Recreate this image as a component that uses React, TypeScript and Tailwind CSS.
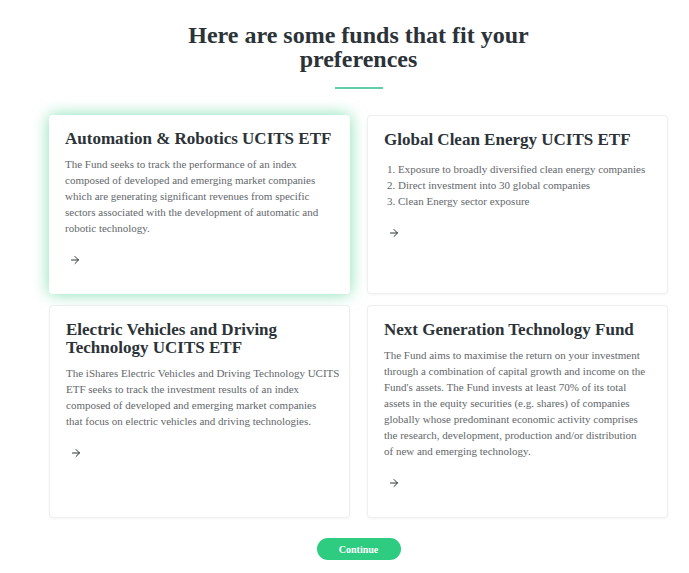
import { ArrowRight } from 'lucide-react';

type Fund = {
  title: string;
  lines?: string[];
  items?: string[];
  active?: boolean;
};

const funds: Fund[] = [
  {
    title: 'Automation & Robotics UCITS ETF',
    lines: [
      'The Fund seeks to track the performance of an index',
      'composed of developed and emerging market companies',
      'which are generating significant revenues from specific',
      'sectors associated with the development of automatic and',
      'robotic technology.',
    ],
    active: true,
  },
  {
    title: 'Global Clean Energy UCITS ETF',
    items: [
      'Exposure to broadly diversified clean energy companies',
      'Direct investment into 30 global companies',
      'Clean Energy sector exposure',
    ],
  },
  {
    title: 'Electric Vehicles and Driving Technology UCITS ETF',
    lines: [
      'The iShares Electric Vehicles and Driving Technology UCITS',
      'ETF seeks to track the investment results of an index',
      'composed of developed and emerging market companies',
      'that focus on electric vehicles and driving technologies.',
    ],
  },
  {
    title: 'Next Generation Technology Fund',
    lines: [
      'The Fund aims to maximise the return on your investment',
      'through a combination of capital growth and income on the',
      "Fund's assets. The Fund invests at least 70% of its total",
      'assets in the equity securities (e.g. shares) of companies',
      'globally whose predominant economic activity comprises',
      'the research, development, production and/or distribution',
      'of new and emerging technology.',
    ],
  },
];

function FundCard({ fund }: { fund: Fund }) {
  return (
    <div
      className={
        fund.active
          ? 'bg-white rounded px-4 pt-[15px] pb-[28px] shadow-[0_0_16px_rgba(46,204,128,0.6)]'
          : 'bg-white rounded px-4 pt-[15px] pb-[28px] border border-[#efefef] shadow-[0_1px_3px_rgba(0,0,0,0.05)]'
      }
    >
      <h2 className="text-[17px] leading-[18px] font-bold text-[#2c3338]">{fund.title}</h2>
      {fund.lines && (
        <p className="mt-2 text-[11px] leading-4 text-[#63676b] whitespace-nowrap">
          {fund.lines.map((l) => (
            <span key={l} className="block">
              {l}
            </span>
          ))}
        </p>
      )}
      {fund.items && (
        <ol className="mt-3 pl-[14px] list-decimal text-[11px] leading-4 text-[#63676b] whitespace-nowrap">
          {fund.items.map((item) => (
            <li key={item}>{item}</li>
          ))}
        </ol>
      )}
      <ArrowRight className="mt-[18px] ml-1 w-3 h-3 text-[#2c3338]" strokeWidth={2} />
    </div>
  );
}

export default function App() {
  return (
    <div
      className="min-h-screen bg-white pl-[49px] pr-[21px] pt-[23px]"
      style={{ fontFamily: '"Liberation Serif", serif' }}
    >
      <h1 className="text-center text-[24px] leading-[24px] font-bold text-[#2c3338]">
        Here are some funds that fit your
        <br />
        preferences
      </h1>
      <div className="mx-auto mt-4 w-12 h-[2px] bg-[#5ecfa8]" />
      <div className="mt-[26px] grid grid-cols-2 gap-x-[17px] gap-y-[11px]">
        {funds.map((f) => (
          <FundCard key={f.title} fund={f} />
        ))}
      </div>
      <div className="flex justify-center mt-[20px]">
        <button className="w-[84px] h-[22px] rounded-full bg-[#2ecc80] text-white text-[10px] font-bold">
          Continue
        </button>
      </div>
    </div>
  );
}
